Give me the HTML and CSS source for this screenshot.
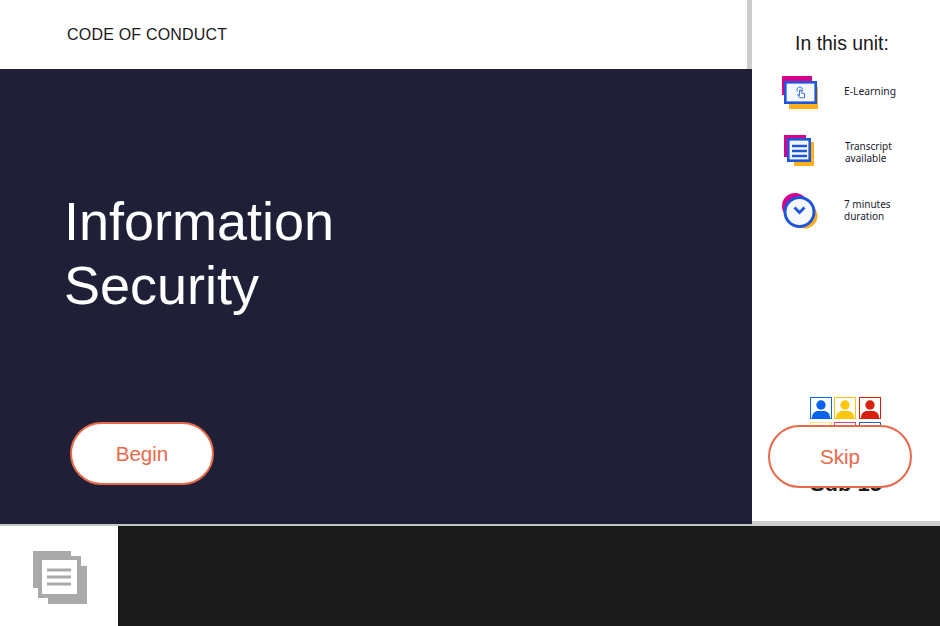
FILE: index.html
```html
<!DOCTYPE html>
<html lang="en">
<head>
    <meta charset="UTF-8">
    <title>Information Security</title>
    <link rel="stylesheet" href="styles.css">
</head>
<body>
  <div class="stage">
    <div class="lesson">
      <header class="lesson-header">
        <p class="course">CODE OF CONDUCT</p>
      </header>
      <main class="hero">
        <h1>Information<br>Security</h1>
        <button class="pill begin" type="button">Begin</button>
      </main>
    </div>

    <aside class="unit">
      <h2>In this unit:</h2>

      <div class="unit-row">
        <svg class="unit-icon" viewBox="0 0 40 40">
          <rect x="2" y="4" width="30" height="19" fill="#d6008c"/>
          <rect x="9" y="15" width="29" height="22" fill="#fbb01c"/>
          <rect x="5.3" y="10.3" width="30.4" height="20.4" fill="#f6f8ff" stroke="#1f55d8" stroke-width="2.6"/>
          <path d="M17.5 19.5a2.8 2.8 0 1 1 4.5 0" fill="none" stroke="#3f72de" stroke-width="1"/>
          <path d="M19.5 18v5.5l-2-1 2.2 3.3h4.8v-4l-3.2-1v-2.8z" fill="none" stroke="#3f72de" stroke-width="1"/>
        </svg>
        <span class="unit-text first">E-Learning</span>
      </div>

      <div class="unit-row">
        <svg class="unit-icon" viewBox="0 0 40 40">
          <rect x="4" y="5" width="22" height="22" fill="#d6008c"/>
          <rect x="14" y="12" width="20" height="24" fill="#fbb01c"/>
          <rect x="8.3" y="9.3" width="21.4" height="21.4" fill="#f6f8ff" stroke="#1f55d8" stroke-width="2.6"/>
          <path d="M12 16h15M12 21h15M12 26h15" stroke="#1f55d8" stroke-width="2.4"/>
        </svg>
        <span class="unit-text second">Transcript<br>available</span>
      </div>

      <div class="unit-row last">
        <svg class="unit-icon" viewBox="0 0 40 40">
          <circle cx="15" cy="15" r="13" fill="#d6008c"/>
          <circle cx="25" cy="25" r="12.5" fill="#fbb01c"/>
          <circle cx="19.5" cy="21" r="14.5" fill="#f6f8ff" stroke="#1f55d8" stroke-width="3"/>
          <path d="M14.5 16.5l5 5 5-5" fill="none" stroke="#1f55d8" stroke-width="2.8"/>
        </svg>
        <span class="unit-text third">7 minutes<br>duration</span>
      </div>

      <div class="audience">
        <div class="faces">
          <svg class="face face-blue" viewBox="1 1 20 20"><circle cx="11" cy="8" r="4.7"/><path d="M2 21c0-5 3-7 6-7h6c3 0 6 2 6 7z"/></svg>
          <svg class="face face-yellow" viewBox="1 1 20 20"><circle cx="11" cy="8" r="4.7"/><path d="M2 21c0-5 3-7 6-7h6c3 0 6 2 6 7z"/></svg>
          <svg class="face face-red" viewBox="1 1 20 20"><circle cx="11" cy="8" r="4.7"/><path d="M2 21c0-5 3-7 6-7h6c3 0 6 2 6 7z"/></svg>
          <svg class="face face-cream" viewBox="1 1 20 20"></svg>
          <svg class="face face-pink" viewBox="1 1 20 20"></svg>
          <svg class="face face-navy" viewBox="1 1 20 20"></svg>
        </div>
        <p class="audience-label">Sub 15</p>
      </div>

      <button class="pill skip" type="button">Skip</button>
    </aside>
  </div>

  <footer class="bar">
    <div class="bar-tab">
      <svg class="notes-icon" viewBox="0 0 54 53">
        <rect width="38" height="37" fill="#a9a9a9"/>
        <rect x="5" y="5" width="43" height="42" fill="#a9a9a9"/>
        <rect x="15" y="15" width="39" height="38" fill="#a9a9a9"/>
        <rect x="9" y="9" width="35" height="34" fill="#fff"/>
        <path d="M14 19h24M14 26h24M14 33h24" stroke="#a9a9a9" stroke-width="3"/>
      </svg>
    </div>
  </footer>
</body>
</html>
```

FILE: styles.css
```css
body {
    font-family: "Liberation Sans", Arial, sans-serif;
    margin: 0;
    width: 940px;
    height: 626px;
    overflow: hidden;
    background-color: #fff;
}
.stage {
    display: flex;
    height: 526px;
}
.lesson {
    width: 752px;
    display: flex;
    flex-direction: column;
}
.lesson-header {
    height: 69px;
    flex: none;
    box-sizing: border-box;
    padding-left: 67px;
    display: flex;
    align-items: center;
    border-right: 5px solid #cdcdcd;
}
.course {
    margin: 0;
    font-size: 16px;
    letter-spacing: 0.2px;
    color: #1a1a1a;
}
.hero {
    flex: 1;
    background-color: #1f2037;
    border-bottom: 2px solid #c4c4c4;
    padding: 120px 0 0 64px;
}
.hero h1 {
    margin: 0;
    font-size: 54px;
    font-weight: normal;
    line-height: 64px;
    color: #fff;
}
.pill {
    display: block;
    width: 144px;
    height: 63px;
    box-sizing: border-box;
    background-color: #fff;
    border: 2.6px solid #e8694a;
    border-radius: 32px;
    color: #e8694a;
    font-family: inherit;
    font-size: 20.6px;
}
.begin {
    margin: 105px 0 0 6px;
}
.unit {
    position: relative;
    flex: 1;
    box-sizing: border-box;
    border-bottom: 5px solid #cdcdcd;
    height: 526px;
    padding-top: 31px;
}
.unit h2 {
    margin: 0 8px 8px 0;
    font-size: 19.4px;
    font-weight: normal;
    line-height: 24px;
    text-align: center;
    color: #1a1a1a;
}
.unit-row {
    display: flex;
    align-items: center;
    height: 58px;
    padding-left: 28px;
}
.unit-row.last {
    margin-top: 3px;
}
.unit-icon {
    width: 40px;
    height: 40px;
    flex: none;
}
.unit-text {
    margin-left: 25px;
    font-family: "Noto Sans", sans-serif;
    font-size: 10px;
    line-height: 12px;
    color: #1a1a2e;
}
.unit-text.first {
    font-size: 10.3px;
    margin-left: 24px;
    margin-bottom: 2px;
}
.unit-text.second {
    margin-top: 4px;
}
.unit-text.third {
    margin-left: 24px;
    margin-bottom: 2px;
}
.audience {
    margin-top: 157px;
    text-align: center;
}
.faces {
    display: grid;
    grid-template-columns: repeat(3, 22px);
    gap: 3px 2.5px;
    justify-content: center;
    margin-left: -2px;
}
.face {
    width: 22px;
    height: 22px;
    box-sizing: border-box;
    border: 1px solid currentColor;
    fill: currentColor;
    background-color: #fff;
}
.face-blue { color: #0a63ee; }
.face-yellow { color: #fdc70c; }
.face-red { color: #d9200f; }
.face-cream { color: #fde58a; }
.face-pink { color: #d6447f; }
.face-navy { color: #2b5fb5; }
.audience-label {
    margin: 27px 0 0;
    font-size: 22px;
    font-weight: bold;
    line-height: 26px;
    color: #1a1a1a;
}
.skip {
    position: absolute;
    left: 16px;
    top: 425px;
}
.bar {
    height: 100px;
    background-color: #1a1a1a;
}
.bar-tab {
    width: 118px;
    height: 100px;
    box-sizing: border-box;
    padding: 25px 0 0 33px;
    background-color: #fff;
}
.notes-icon {
    display: block;
    width: 54px;
    height: 53px;
}
```
